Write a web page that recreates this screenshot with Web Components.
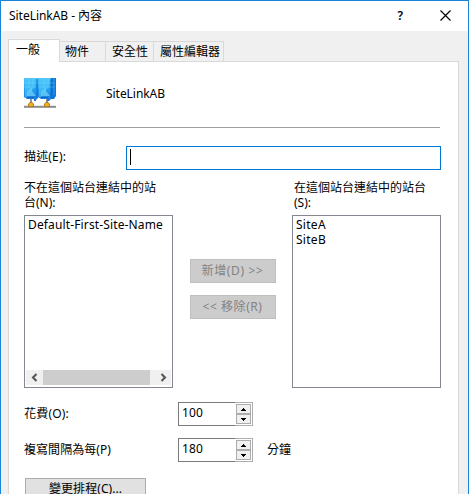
<!DOCTYPE html>
<html lang="zh-Hant"><head><meta charset="utf-8"><title>SiteLinkAB - 內容</title>
<style>html,body{margin:0;width:469px;height:494px;overflow:hidden;background:#fff}body{font:400 12px/15px "Noto Sans","Noto Sans CJK TC",sans-serif;color:#000}</style></head><body>
<property-dialog></property-dialog>
<script>
const define=(name,html,init)=>customElements.define(name,class extends HTMLElement{
 connectedCallback(){if(this.shadowRoot)return;const r=this.attachShadow({mode:'open'});r.innerHTML=html;if(init)init(this,r)}
});
// Text label; "w" is the advance width of its longest line in pixels.
define('ui-label','<style>:host{display:block;line-height:15px;white-space:pre;flex:none;width:max-content}span{display:inline-block;vertical-align:top}</style><span><slot></slot></span>',(h,r)=>{
 const w=+h.getAttribute('w'),s=r.querySelector('span'),n=Math.max(...h.textContent.split('\n').map(t=>[...t].length));
 if(w&&n)s.style.letterSpacing=(w-s.getBoundingClientRect().width)/n+'px';
});
define('title-bar',`<style>:host{display:flex;flex:none;height:30px;background:#fff;box-sizing:border-box;padding:7px 17px 0 8px}.sp{flex:1}svg{margin-top:2px;flex:none}.q{margin:0 37px 0 0;font:600 12px/15px "Noto Sans"}</style><slot></slot><span class="sp"></span><span class="q">?</span><svg width="11" height="11" viewBox="0 0 11 11"><path d="M.5.5l10 10M10.500.5l-10 10" stroke="#000" stroke-width="1.150" fill="none"/></svg>`);
define('tab-item','<style>:host{display:flex;box-sizing:border-box;height:20px;background:#f0f0f0;border:1px solid #d9d9d9;border-bottom:0;border-left:0;padding:2px 0 0 6px;flex:none}:host([active]){height:23px;background:#fff;border-left:1px solid #d9d9d9;padding:2px 0 0 7px;margin-bottom:-1px;z-index:1}</style><slot></slot>');
define('list-box','<style>:host{display:flex;flex-direction:column;box-sizing:border-box;width:149px;height:173px;border:1px solid #828790;background:#fff;padding:1px 1px 2px 3px;flex:none}</style><slot></slot>');
define('scroll-bar','<style>:host{display:flex;margin:auto 0 0 -2px;width:145px;height:15px;background:#f0f0f0;flex:none}i{display:block;width:107px;background:#cdcdcd}svg{width:17px;height:15px}svg:last-child{margin-left:4px}</style><svg><path d="M10.500 4L7 7.500l3.500 3.500" fill="none" stroke="#555" stroke-width="2.100"/></svg><i></i><svg><path d="M7.500 4l3.500 3.500L7.500 11" fill="none" stroke="#555" stroke-width="2.100"/></svg>');
define('push-button','<style>:host{display:flex;box-sizing:border-box;height:24px;justify-content:center;padding-top:3px;border:1px solid #adadad;background:#e1e1e1;flex:none}:host([disabled]){color:#838383;background:#ccc;border-color:#bfbfbf}</style><slot></slot>');
define('text-input','<style>:host{display:block;box-sizing:border-box;width:315px;height:24px;border:1px solid #0078d7;padding:2px 3px;flex:none}i{display:block;width:1px;height:16px;background:#000}</style><i></i>');
define('spin-box','<style>:host{display:flex;box-sizing:border-box;width:75px;height:24px;flex:none}.v{box-sizing:border-box;width:57px;height:24px;border:1px solid #7a7a7a;border-right:0;padding:2px 0 0 3px}.u{box-sizing:border-box;width:18px;height:24px;border:1px solid #adadad;border-left:0;padding:1px}b{display:block;box-sizing:border-box;width:15px;height:10px;border:1px solid #acacac;background:#f0f0f0}svg{display:block;width:13px;height:8px}</style><div class="v"><slot></slot></div><div class="u"><b><svg><path d="M4 6V5h1V4h1V3h1v1h1v1h1v1z"/></svg></b><b><svg><path d="M4 3h5v1H8v1H7v1H6V5H5V4H4z"/></svg></b></div>');
define('site-link-icon',`<style>:host{display:block;width:32px;height:31px;flex:none}svg{display:block}</style><svg width="32" height="31" viewBox="0 0 32 31"><defs><linearGradient id="b" x2="0" y2="1"><stop stop-color="#55c4f8"/><stop offset=".5" stop-color="#22a0f0"/><stop offset="1" stop-color="#1c74dc"/></linearGradient></defs>
<path d="M0 28.800h32" stroke="#8b8b8b" stroke-width="2"/><path d="M7 20v6M23 20v6" stroke="#8a8a8a" stroke-width="1.800"/>
<path d="M26 0h6v18l-2 3h-4z" fill="#0c78dc"/><path d="M0 0h14v20l-2 2v1h-2v-2H3l-3-2zM14 0h13v21l-2 2h-2v-2h-6l-3-2z" fill="url(#b)"/>
<path d="M1 1h10v8l-3 3-3 2-2 5H1zM15 1h10v8l-3 3-3 2-2 5h-2z" fill="#48c8fb" opacity=".65"/><path d="M3 18v-4l5-5v4l4 5zM17 18v-4l5-5v4l4 5z" fill="#6accf9" opacity=".8"/>
<path d="M13 1v19M27 1v18M3 19.500h7M17 19.500h7" stroke="#0868c8" fill="none"/><path d="M0 5h13M14 5h17M0 9h12M15 9h16M5 0v10M9 0v8M20 0v9M24 0v8M30 0v17" stroke="#91e8ff" stroke-width=".6" opacity=".5"/>
<path d="M4 29v-3l2-2h2l2 2v3zM20 29v-3l2-2h2l2 2v3z" fill="#b27b15"/><path d="M5 28v-2l1-1h2l1 1v2zM21 28v-2l1-1h2l1 1v2z" fill="#edb22a"/></svg>`);
define('property-dialog',`<style>
:host{display:flex;flex-direction:column;box-sizing:border-box;width:469px;height:494px;border:1px solid #1883d7;border-bottom:0;background:#f0f0f0;overflow:hidden}
.tabs{display:flex;flex:none;align-items:flex-end;height:22px;margin:8px 0 0 7px}
.panel{box-sizing:border-box;width:451px;height:440px;margin-left:7px;border:1px solid #d9d9d9;border-bottom:0;background:#fff;padding:16px 17px 0 15px;flex:none}
.row{display:flex}.head{height:31px}.head ui-label{margin:8px 0 0 50px}.hr{height:1px;width:416px;background:#a0a0a0;margin-top:18px}
.desc{margin-top:18px;justify-content:space-between;height:24px}.desc ui-label{margin-top:3px}
.sites{margin-top:10px;justify-content:space-between}.cap{height:35px}.mid{display:flex;flex-direction:column;width:86px;gap:12px;padding-top:79px}
.num{height:24px;margin-top:12px}.num spin-box{margin-left:auto}.field{display:flex;width:229px;justify-content:space-between}.field>ui-label{margin-top:4px}.unit{margin:4px 0 0 14px}
</style>
<title-bar><ui-label w="93">SiteLinkAB - 內容</ui-label></title-bar>
<div class="tabs"><tab-item active style="width:52px"><ui-label w="24">一般</ui-label></tab-item><tab-item style="width:46px;padding-left:5px"><ui-label w="24">物件</ui-label></tab-item><tab-item style="width:48px"><ui-label w="36">安全性</ui-label></tab-item><tab-item style="width:70px"><ui-label w="60">屬性編輯器</ui-label></tab-item></div>
<div class="panel"><div class="row head"><site-link-icon></site-link-icon><ui-label w="59">SiteLinkAB</ui-label></div><div class="hr"></div>
<div class="row desc"><ui-label w="42">描述(E):</ui-label><text-input></text-input></div>
<div class="row sites"><div><div class="cap"><ui-label w="132">不在這個站台連結中的站\n台(N):</ui-label></div><list-box><ui-label w="135">Default-First-Site-Name</ui-label><scroll-bar></scroll-bar></list-box></div>
<div class="mid"><push-button disabled><ui-label w="62">新增(D) &gt;&gt;</ui-label></push-button><push-button disabled><ui-label w="60">&lt;&lt; 移除(R)</ui-label></push-button></div>
<div><div class="cap"><ui-label w="132" style="margin-left:2px">在這個站台連結中的站台\n(S):</ui-label></div><list-box><ui-label w="30">SiteA\nSiteB</ui-label></list-box></div></div>
<div class="row num" style="margin-top:14px"><div class="field"><ui-label w="45">花費(O):</ui-label><spin-box><ui-label w="21">100</ui-label></spin-box></div></div>
<div class="row num"><div class="field"><ui-label w="87">複寫間隔為每(P)</ui-label><spin-box><ui-label w="21">180</ui-label></spin-box></div><ui-label class="unit" w="24">分鐘</ui-label></div>
<push-button style="width:121px;margin:16px 0 0 1px;padding-top:2px"><ui-label w="73">變更排程(C)...</ui-label></push-button>
</div>`);
</script></body></html>
